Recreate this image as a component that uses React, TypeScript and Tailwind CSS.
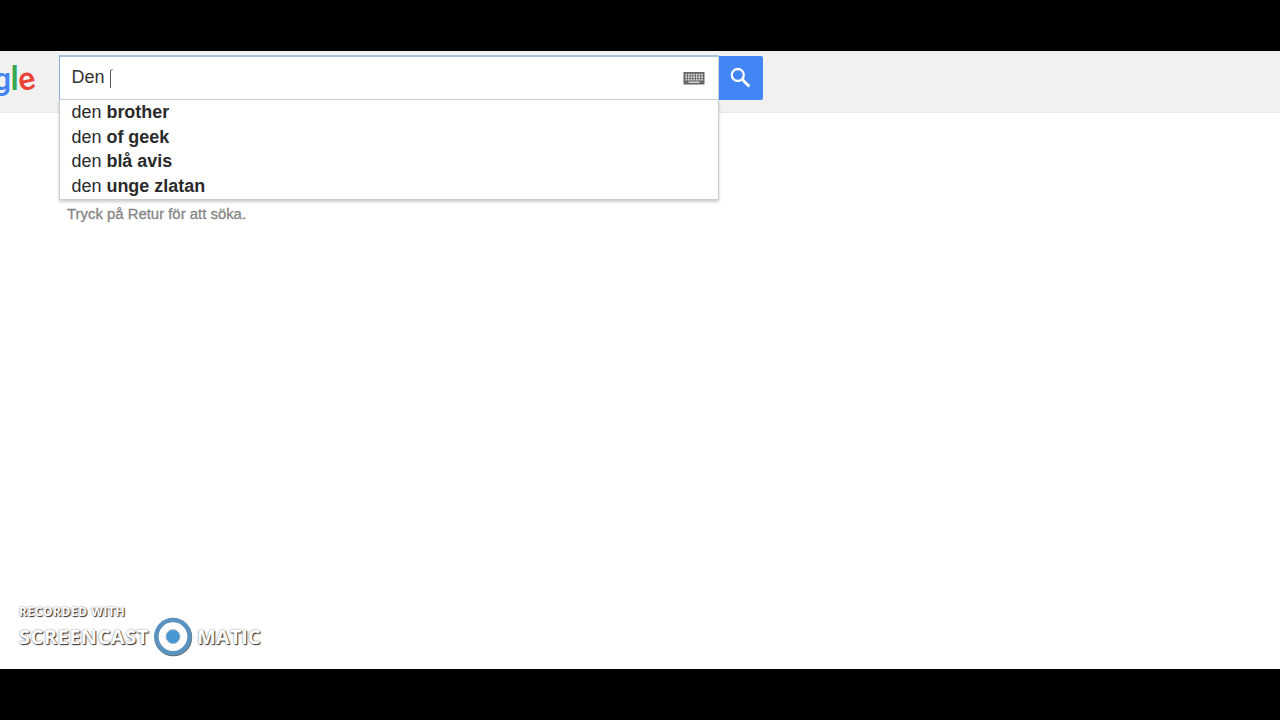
const suggestions = ["brother", "of geek", "blå avis", "unge zlatan"];

const KeyboardIcon = () => (
  <svg width="22" height="14" viewBox="0 0 22 14">
    <rect x="0.5" y="1" width="21" height="12.5" fill="#666" />
    <g stroke="#e4e4e4" strokeWidth="1.7">
      <path d="M2.5 3.6H20" strokeDasharray="1.6 1" />
      <path d="M2.5 6.2H20" strokeDasharray="1.6 1" />
      <path d="M2.5 8.7H20" strokeDasharray="1.6 1" />
      <path d="M5.5 11.2H16.5" strokeWidth="1.3" />
    </g>
  </svg>
);

const SearchIcon = () => (
  <svg width="22" height="22" viewBox="0 0 22 22" fill="none" stroke="#fff">
    <circle cx="7.8" cy="8" r="6" strokeWidth="2.3" />
    <path d="M12.1 12.3L19.3 19.5" strokeWidth="3" />
  </svg>
);

const Logo = () => (
  <div className="flex w-[59px] shrink-0 justify-end pr-[24px] font-[Roboto,sans-serif] text-[32px] leading-[56px] font-medium">
    <span className="-mr-px text-[#4285f4]">g</span>
    <span className="-mr-px text-[34px] leading-[54px] text-[#34a853]">l</span>
    <span className="inline-block h-[57px] -rotate-12 text-[#ea4335]">e</span>
  </div>
);

const SearchBox = () => (
  <div className="mt-[4px] w-[660px] shrink-0">
    <div className="flex h-[45px] items-center border-x border-t-2 border-b border-t-[#a4c3e0] border-r-[#d0d0d0] border-b-[#d0d0d0] border-l-[#86abd8] bg-white pr-[13px] pl-[11.5px]">
      <span className="-mt-px text-[18px] whitespace-pre text-[#333]">Den </span>
      <svg width="4" height="19" viewBox="0 0 4 19" className="-ml-px mt-[1px]">
        <path d="M1.5 19V1.5L3.6 0.6" fill="none" stroke="#555" />
      </svg>
      <div className="ml-auto">
        <KeyboardIcon />
      </div>
    </div>
    <ul className="border border-t-0 border-[#ccc] bg-white pb-[1px] shadow-[0_2px_3px_rgba(0,0,0,0.2)]">
      {suggestions.map((text) => (
        <li key={text} className="h-[24.6px] pl-[11.5px] text-[17.95px] leading-[24.4px] text-[#2a2a2a]">
          den <b>{text}</b>
        </li>
      ))}
    </ul>
    <p className="mt-[4px] pl-[8px] text-[14.9px] leading-[20px] text-[#858585] [-webkit-text-stroke:0.3px_#858585]">
      Tryck på Retur för att söka.
    </p>
  </div>
);

const Watermark = () => (
  <div className="absolute bottom-[1px] left-[19px] h-[62px] font-['Open_Sans',sans-serif] font-bold text-white [text-shadow:1px_1px_1px_#333,0_0_2px_#777]">
    <div className="h-[10px] text-[12px] leading-[12px] tracking-[0.55px]">RECORDED WITH</div>
    <div className="flex items-center">
      <span className="w-[134px] text-[20px] leading-[42px] tracking-[0.5px]">SCREENCAST</span>
      <svg width="40" height="42" viewBox="0 0 40 42" className="shrink-0">
        <circle cx="20.3" cy="21.4" r="16.8" fill="none" stroke="#666" strokeWidth="4.2" />
        <circle cx="20" cy="20.6" r="16.6" fill="#fff" stroke="#5b93c0" strokeWidth="4.5" />
        <circle cx="20" cy="20.6" r="7" fill="#4696d2" stroke="#a5b8c6" />
      </svg>
      <span className="ml-[4px] text-[20px] leading-[42px]">MATIC</span>
    </div>
  </div>
);

export default function App() {
  return (
    <div className="h-[720px] w-[1280px] overflow-hidden bg-black py-[51px] font-['Liberation_Sans',Arial,sans-serif]">
      <main className="relative h-[618px] overflow-hidden bg-white">
        <header className="flex h-[62px] items-start border-b border-[#e9e9e9] bg-[#f1f1f1]">
          <Logo />
          <SearchBox />
          <button className="mt-[5px] flex h-[44px] w-[44px] items-center justify-center rounded-r-[2px] bg-[#4285f4]">
            <SearchIcon />
          </button>
        </header>
        <Watermark />
      </main>
    </div>
  );
}
